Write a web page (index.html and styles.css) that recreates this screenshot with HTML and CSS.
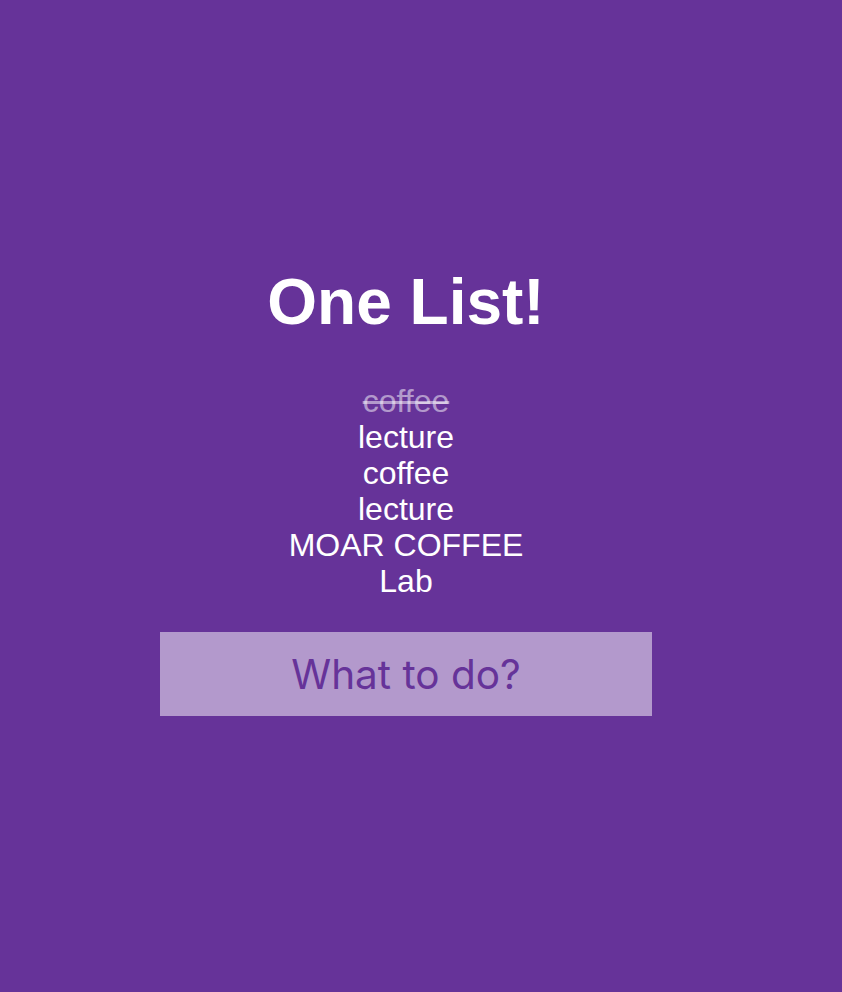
FILE: index.html
```html
<!DOCTYPE html>
<html>
<head>
<meta charset="utf-8">
<link rel="stylesheet" href="styles.css">
</head>
<body>
<main class="app">
  <h1 class="title">One List!</h1>
  <ul class="todos">
    <li class="done">coffee</li>
    <li>lecture</li>
    <li>coffee</li>
    <li>lecture</li>
    <li>MOAR COFFEE</li>
    <li>Lab</li>
  </ul>
  <form class="add">
    <input class="add-input" type="text" placeholder="What to do?">
  </form>
</main>
</body>
</html>
```

FILE: styles.css
```css
html, body {
  margin: 0;
  padding: 0;
  background: #663399;
  height: 100%;
}
body {
  font-family: "Liberation Sans", Arial, sans-serif;
  color: #ffffff;
}
.app {
  width: 812px;
  display: flex;
  flex-direction: column;
  align-items: center;
  padding-top: 265px;
}
.title {
  margin: 0;
  font-size: 64px;
  font-weight: bold;
  line-height: 74px;
}
.todos {
  list-style: none;
  margin: 44px 0 0;
  padding: 0;
  text-align: center;
  font-size: 32px;
  line-height: 36px;
}
.todos li.done {
  color: rgba(255, 255, 255, 0.5);
  text-decoration: line-through;
}
.add {
  margin-top: 33px;
}
.add-input {
  display: block;
  box-sizing: border-box;
  width: 492px;
  height: 84px;
  border: none;
  outline: none;
  background: rgba(255, 255, 255, 0.5);
  color: #663399;
  font-family: Inter, "Noto Sans", sans-serif;
  font-size: 40.5px;
  text-align: center;
  padding: 0;
}
.add-input::placeholder {
  color: #663399;
  opacity: 1;
}
```
